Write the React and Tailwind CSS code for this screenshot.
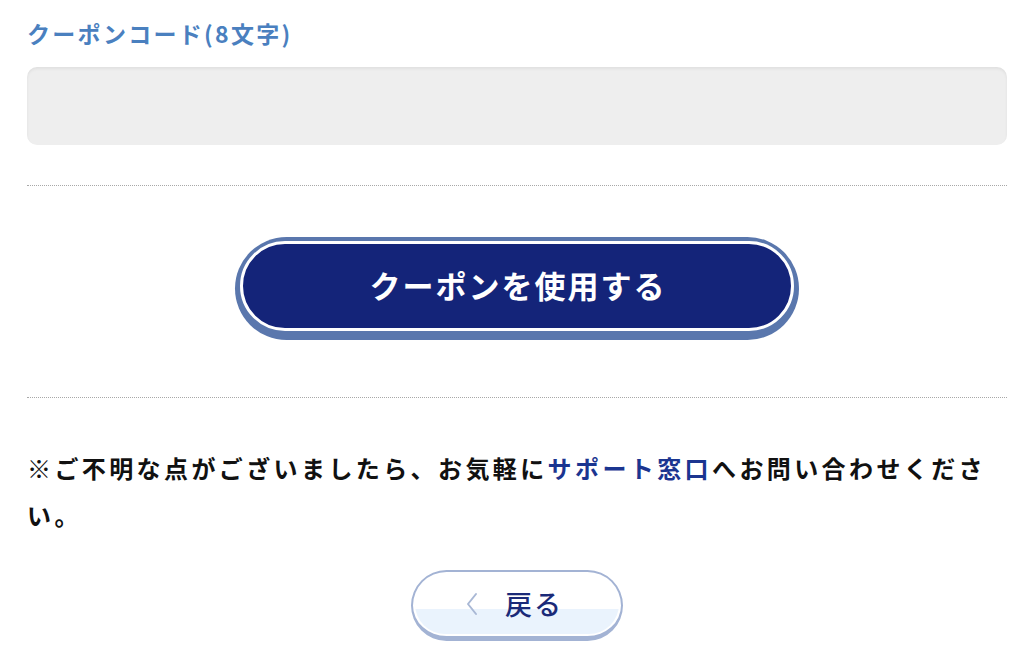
export default function App() {
  return (
    <div className="min-h-[668px] bg-white px-[27px] pt-[16px] font-['Noto_Sans_CJK_JP','Noto_Sans',sans-serif]">
      <div className="text-[23px] font-bold leading-[34px] tracking-[2.3px] text-[#4a80bf]">
        クーポンコード(8文字)
      </div>
      <input
        type="text"
        className="mt-[17px] block h-[78px] w-full rounded-[10px] bg-[#eeeeee] px-4 text-[22px] shadow-[inset_0_2px_3px_rgba(0,0,0,0.06)] outline-none"
      />
      <div className="mt-[40px] border-t border-dotted border-[#a8a8a8]" />
      <div className="mt-[51px] flex justify-center">
        <button className="h-[103px] w-[564px] rounded-full bg-[#5a77ad] px-[5px] pb-[9px] pt-[4px]">
          <span className="flex h-full w-full items-center justify-center rounded-full border-[3px] border-white bg-[#142479] pb-[1px] pl-[2px] text-[31px] font-bold tracking-[2px] text-white">
            クーポンを使用する
          </span>
        </button>
      </div>
      <div className="mt-[57px] border-t border-dotted border-[#a8a8a8]" />
      <p className="mt-[46px] text-[24px] font-bold leading-[47px] tracking-[3.4px] text-[#111111]">
        ※ご不明な点がございましたら、お気軽に
        <span className="text-[#1b3590]">サポート窓口</span>
        へお問い合わせください。
      </p>
      <div className="mt-[32px] flex justify-center">
        <button className="h-[71px] w-[212px] rounded-full border-2 border-b-[5px] border-[#a3b3d4] bg-white p-[2px]">
          <span className="flex h-full w-full items-center justify-center gap-[26px] rounded-full bg-[linear-gradient(to_bottom,#ffffff_0%,#ffffff_58%,#eaf3fd_58%,#eaf3fd_100%)] pr-[6px]">
            <svg width="14" height="24" viewBox="0 0 14 24" fill="none">
              <polyline points="11,2 3,12 11,22" stroke="#a9b8d5" strokeWidth="2" strokeLinecap="round" strokeLinejoin="round" />
            </svg>
            <span className="text-[27px] font-medium tracking-[2px] text-[#1b2a78]">戻る</span>
          </span>
        </button>
      </div>
    </div>
  );
}
